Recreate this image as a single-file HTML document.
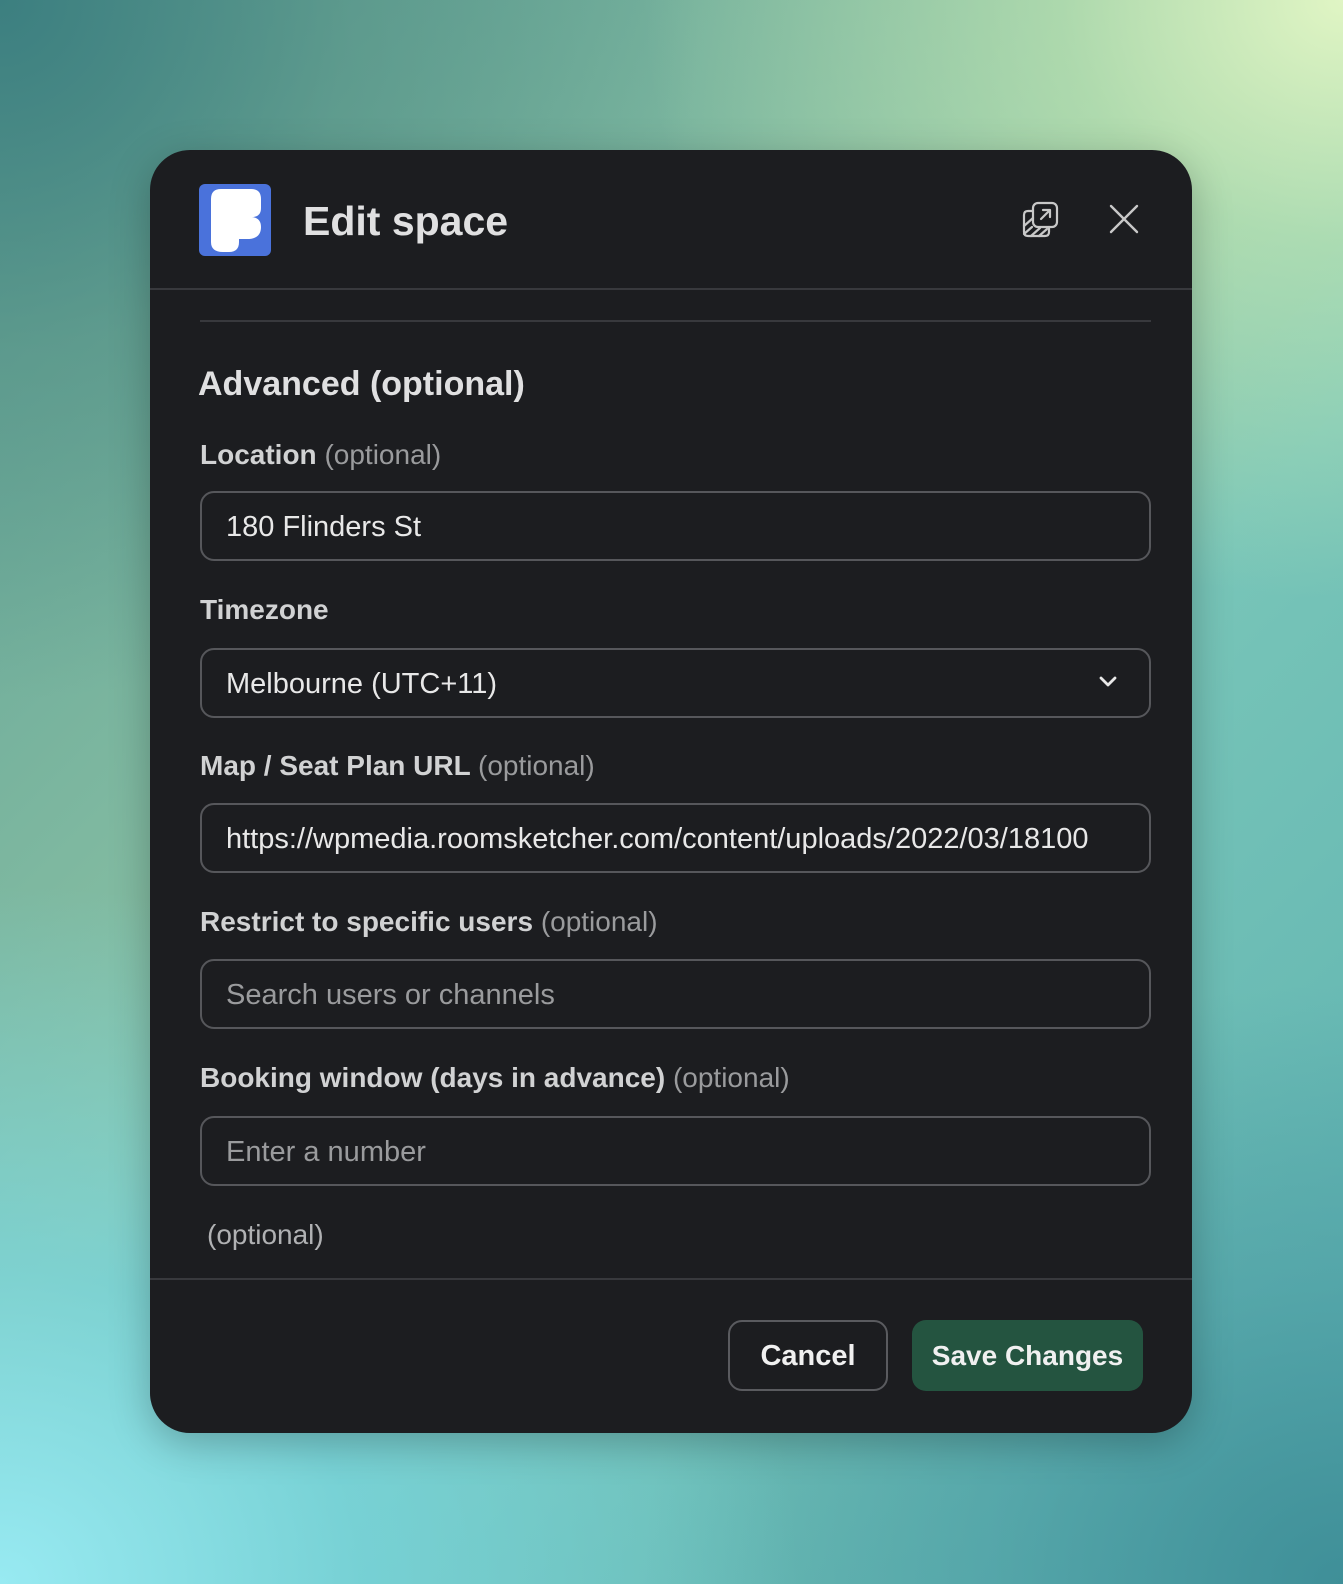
<!DOCTYPE html>
<html><head><meta charset="utf-8"><style>
*{box-sizing:border-box;margin:0;padding:0}
html,body{width:1343px;height:1584px;overflow:hidden}
body{font-family:"Liberation Sans",sans-serif;position:relative;
background:
radial-gradient(ellipse 700px 600px at 1343px 0px,#e0f5c4 0%,rgba(200,235,180,0.6) 40%,rgba(150,200,160,0) 100%),
radial-gradient(ellipse 800px 700px at 0px 1584px,#98eaf2 0%,rgba(120,215,225,0.7) 45%,rgba(100,190,200,0) 100%),
radial-gradient(ellipse 700px 600px at 1343px 1584px,#3f8f98 0%,rgba(70,150,160,0.5) 50%,rgba(80,160,160,0) 100%),
radial-gradient(ellipse 700px 700px at 0px 0px,#3c7f80 0%,rgba(80,140,130,0.5) 50%,rgba(100,160,140,0) 100%),
linear-gradient(135deg,#5d9e94 0%,#8cc3a5 45%,#78c5b8 60%,#5bb0b0 100%);}
.modal{position:absolute;left:150px;top:150px;width:1042px;height:1283px;background:#1c1d20;border-radius:40px;box-shadow:0 10px 40px rgba(0,0,0,.25);color:#d1d2d3}
.abs{position:absolute}
.lbl{position:absolute;left:50px;font-size:28px;font-weight:bold;color:#d1d2d3}
.lbl span{font-weight:normal;color:#9a9b9d}
.inp{position:absolute;left:50px;width:951px;height:70px;border:2px solid #56575b;border-radius:14px;font-size:29px;padding-left:24px;line-height:68px;color:#e8e8e8;white-space:nowrap;overflow:hidden}
.ph{color:#9a9b9d}
</style></head><body>
<div class="modal">
 <svg class="abs" style="left:49px;top:34px" width="72" height="72" viewBox="0 0 72 72">
  <rect width="72" height="72" rx="6" fill="#4a72db"/>
  <path d="M12 15 Q12 5 22 5 H52 Q62 5 62 15 V24 Q62 33 53 33 Q62 34 62 43 Q62 55 48 55 H40 V58 Q40 68 30 68 H24 Q12 68 12 58 Z" fill="#fff"/>
 </svg>
 <div class="abs" style="left:153px;top:48px;font-size:41px;font-weight:bold;color:#e0e0e1">Edit space</div>
 <svg class="abs" style="left:870px;top:50px" width="40" height="40" viewBox="0 0 40 40" fill="none" stroke="#c8c8c8" stroke-width="2.2" stroke-linecap="round" stroke-linejoin="round">
  <rect x="13" y="3" width="24" height="24" rx="5"/>
  <path d="M21 19 L30 10 M23 10 H30 V17"/>
  <path d="M13 11 H8 Q4 11 4 15 V32 Q4 36 8 36 H25 Q29 36 29 32 V27"/>
  <path d="M4 26 L13 18 M4 34 L12 27 M11 36 L20 28 M19 36 L27 29"/>
 </svg>
 <svg class="abs" style="left:959px;top:54px" width="30" height="30" viewBox="0 0 30 30" stroke="#c8c8c8" stroke-width="2.4" stroke-linecap="round"><path d="M2 2 L28 28 M28 2 L2 28"/></svg>
 <div class="abs" style="left:0;top:138px;width:1042px;height:2px;background:#38393d"></div>
 <div class="abs" style="left:50px;top:170px;width:951px;height:2px;background:#38393d"></div>
 <div class="abs" style="left:48px;top:215px;font-size:34px;font-weight:bold;color:#e0e0e1">Advanced (optional)</div>
 <div class="lbl" style="top:289px">Location <span>(optional)</span></div>
 <div class="inp" style="top:341px">180 Flinders St</div>
 <div class="lbl" style="top:444px">Timezone</div>
 <div class="inp" style="top:498px">Melbourne (UTC+11)
  <svg class="abs" style="right:32px;top:26px" width="18" height="12" viewBox="0 0 18 12" fill="none" stroke="#e8e8e8" stroke-width="2.8" stroke-linecap="round" stroke-linejoin="round"><path d="M2 2 L9 9 L16 2"/></svg>
 </div>
 <div class="lbl" style="top:600px">Map / Seat Plan URL <span>(optional)</span></div>
 <div class="inp" style="top:653px;padding-right:24px;text-overflow:clip">https://wpmedia.roomsketcher.com/content/uploads/2022/03/18100</div>
 <div class="lbl" style="top:756px">Restrict to specific users <span>(optional)</span></div>
 <div class="inp ph" style="top:809px">Search users or channels</div>
 <div class="lbl" style="top:912px">Booking window (days in advance) <span>(optional)</span></div>
 <div class="inp ph" style="top:966px">Enter a number</div>
 <div class="abs" style="left:57px;top:1069px;font-size:28px;color:#b0b1b3">(optional)</div>
 <div class="abs" style="left:0;top:1128px;width:1042px;height:2px;background:#38393d"></div>
 <div class="abs" style="left:578px;top:1170px;width:160px;height:71px;border:2px solid #5a5b5f;border-radius:14px;text-align:center;line-height:68px;font-size:29px;font-weight:bold;color:#f0f0f0">Cancel</div>
 <div class="abs" style="left:762px;top:1170px;width:231px;height:71px;background:#245440;border-radius:14px;text-align:center;line-height:72px;font-size:28px;font-weight:bold;color:#f0f0f0">Save Changes</div>
</div>
</body></html>
